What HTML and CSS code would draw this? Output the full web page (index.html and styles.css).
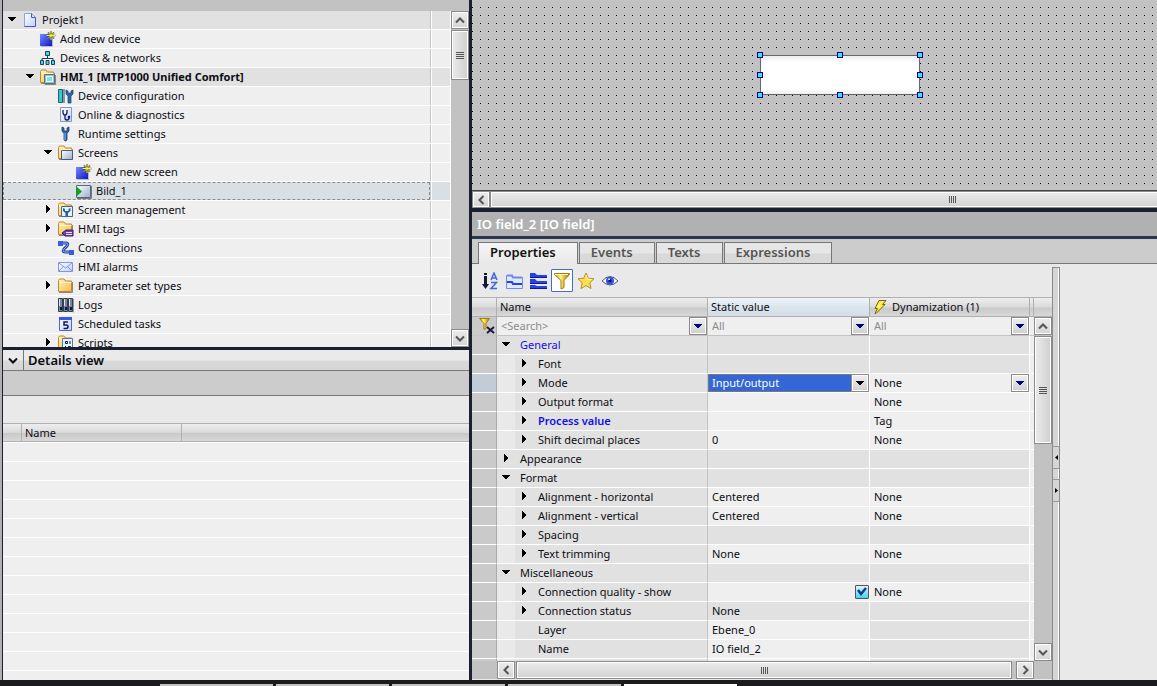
FILE: index.html
```html
<!DOCTYPE html>
<html lang="en">
<head>
<meta charset="utf-8">
<title>Projekt1</title>
<link rel="stylesheet" href="styles.css">
</head>
<body>
<svg class="defs" aria-hidden="true">
  <defs>
    <linearGradient id="g-folder" x1="0" y1="0" x2="1" y2="1"><stop offset="0" stop-color="#fff3b8"/><stop offset="1" stop-color="#f3bd4c"/></linearGradient>
    <linearGradient id="g-blue" x1="0" y1="0" x2="1" y2="1"><stop offset="0" stop-color="#6f8cff"/><stop offset="1" stop-color="#1414c4"/></linearGradient>
    <linearGradient id="g-page" x1="0" y1="0" x2="1" y2="1"><stop offset="0" stop-color="#ffffff"/><stop offset="1" stop-color="#c3d0ff"/></linearGradient>
    <linearGradient id="g-steel" x1="0" y1="0" x2="1" y2="1"><stop offset="0" stop-color="#ffffff"/><stop offset="1" stop-color="#9badcb"/></linearGradient>
    <linearGradient id="g-gold" x1="0" y1="0" x2="1" y2="0"><stop offset="0" stop-color="#c99b00"/><stop offset=".4" stop-color="#fff27c"/><stop offset="1" stop-color="#a87800"/></linearGradient>
    <symbol id="i-down" viewBox="0 0 8 5"><path d="M0 0h8v1H7v1H6v1H5v1H3V3H2V2H1V1H0z"/></symbol>
    <symbol id="t-down" viewBox="0 0 19 18"><path d="M5 6h8v1h-1v1h-1v1h-1v1H8V9H7V8H6V7H5z"/></symbol>
    <symbol id="t-right" viewBox="0 0 19 18"><path d="M7 4h1v1h1v1h1v1h1v2h-1v1H9v1H8v1H7z"/></symbol>
    <symbol id="i-page" viewBox="0 0 16 16"><path d="M2.500 1.500h7l4 4v9h-11z" fill="url(#g-page)" stroke="#8f9fe0"/><path d="M9.500 1.500v4h4v9h-11" fill="none" stroke="#4558c8"/></symbol>
    <symbol id="i-new" viewBox="0 0 16 16"><path d="M1 4h12v12H1z" fill="#8e9ab0" opacity=".6"/><path d="M0 3h12v12H0z" fill="url(#g-blue)"/><path d="M11 0v9M6.500 4.500h9M8 1.500l6 6M14 1.500l-6 6" stroke="#2b3430" stroke-width="1.600"/><path d="M11 0v9M6.500 4.500h9M8 1.500l6 6M14 1.500l-6 6" stroke="#fff34a"/></symbol>
    <symbol id="i-network" viewBox="0 0 16 16"><path d="M7.500 5v4M2 11V8.500h11V11" fill="none" stroke="#183c5c"/><path d="M5.500 1.500h4v4h-4zM.5 10.500h3v4h-3zM6 10.500h3v4H6zM11.500 10.500h3v4h-3z" fill="#4bd2dc" stroke="#1d3f60"/></symbol>
    <symbol id="i-folder" viewBox="0 0 16 16"><path d="M.5 13.500v-11l1-1.500h4.500l1.500 2h6v10.500z" fill="url(#g-folder)" stroke="#c3872b"/><path d="M1.500 4.500h12" stroke="#fff6cf"/><path d="M14.500 4v10.500H1" fill="none" stroke="#8d8778"/></symbol>
    <symbol id="i-hmi" viewBox="0 0 16 16"><use href="#i-folder"/><path d="M4.500 5.500h10v9h-10z" fill="#9ec0c4" stroke="#4c7580"/><path d="M6.500 7.500h6v5h-6z" fill="#6eeaec" stroke="#fff"/><path d="M15.500 6v9.500H5" fill="none" stroke="#888"/></symbol>
    <symbol id="i-wrench" viewBox="0 0 16 16"><path d="M4 1v4l2 2.500V14q1.500 2 3 0V7.500L11 5V1L9 2v3H6V2z" fill="#2c69a9" stroke="#173d70" stroke-width=".8"/><path d="M7 7v7" stroke="#84b8e8"/></symbol>
    <symbol id="i-devconf" viewBox="0 0 16 16"><path d="M.5 1.500h4v13h-4z" fill="#35c9d2" stroke="#205e6b"/><path d="M6 1v14" stroke="#8499a5" stroke-width="2"/><path d="M8 2v4l2 2v7h3V8l2-2V2l-2 1v2h-3V3z" fill="#2c69a9" stroke="#173d70" stroke-width=".7"/></symbol>
    <symbol id="i-diag" viewBox="0 0 16 16"><path d="M2.500.5h11v14h-11z" fill="url(#g-page)" stroke="#8599c7"/><path d="M5 3v2q0 3 2 3t2-3V3M7 8v3q0 2 2 2t2-2" fill="none" stroke="#141b56" stroke-width="1.300"/><circle cx="11" cy="10" r="1.300" fill="#141b56"/></symbol>
    <symbol id="i-screens" viewBox="0 0 16 16"><use href="#i-folder"/><path d="M3.500 5.500h11v9h-11z" fill="url(#g-steel)" stroke="#465b80"/></symbol>
    <symbol id="i-screen" viewBox="0 0 16 16"><path d="M.5 2.500h14v12H.5z" fill="url(#g-steel)" stroke="#52698d"/><path d="M15.500 3v12.500H1" fill="none" stroke="#777"/><path d="M0 3l6 5.500L0 14z" fill="#159c25"/></symbol>
    <symbol id="i-manage" viewBox="0 0 16 16"><use href="#i-folder"/><path d="M3.500 4.500h11v10h-11z" fill="#e8f0fb" stroke="#4d6686"/><path d="M5 6v3l2.500 2v3h2.500v-3l2.500-2V6l-2 1v2H7V7z" fill="#235fa5"/></symbol>
    <symbol id="i-tags" viewBox="0 0 16 16"><use href="#i-folder"/><path d="M4 12l4-3h7v6H7z" fill="#6b45ad" stroke="#3c1a78"/><path d="M8 11.500h6M8 13.500h6" stroke="#e8dcff"/></symbol>
    <symbol id="i-conn" viewBox="0 0 16 16"><path d="M3 3h5q3 0 1 3l-3 3q-2 3 1 3h6" fill="none" stroke="#27459e" stroke-width="3"/><path d="M3 3h5q3 0 1 3l-3 3q-2 3 1 3h6" fill="none" stroke="#8fb0ff"/><path d="M0 1h5v5H0zM11 10h5v5h-5z" fill="#355fdd"/></symbol>
    <symbol id="i-mail" viewBox="0 0 16 16"><path d="M.5 3.500h14v9H.5z" fill="url(#g-page)" stroke="#7e95e0"/><path d="M1 4l6.500 5L14 4M1 12l4-4M14 12l-4-4" fill="none" stroke="#7e95e0"/></symbol>
    <symbol id="i-logs" viewBox="0 0 16 16"><path d="M.5 1.500h4v13h-4zM5.500 1.500h4v13h-4zM10.500 1.500h4v13h-4z" fill="#7a879e" stroke="#333e52"/><path d="M1.500 2v7M6.500 2v7M11.500 2v7" stroke="#dfe6f2"/><path d="M2 10h2v3H2zM7 10h2v3H7zM12 10h2v3h-2z" fill="#111936"/><path d="M15.500 2v13.500" stroke="#999"/></symbol>
    <symbol id="i-task" viewBox="0 0 16 16"><path d="M1.500 1.500h12v13h-12z" fill="url(#g-page)" stroke="#5366c5"/><path d="M1 1h13v3H1z" fill="#3557e5"/><path d="M10 6H6v3h2q2 0 2 1.700T8 12.500H5.500" fill="none" stroke="#151a60" stroke-width="1.500"/></symbol>
    <symbol id="i-scripts" viewBox="0 0 16 16"><use href="#i-folder"/><path d="M4.500 3.500h10v12h-10z" fill="#e6f4ff" stroke="#55779c"/><path d="M7.500 6.500h2v2h-2zM12 6v3M7.500 11v3M10.500 11.500h2v2h-2z" fill="none" stroke="#111936"/></symbol>
    <symbol id="i-up" viewBox="0 0 10 7"><path d="M1 5.500l4-4 4 4" fill="none" stroke="#555" stroke-width="2"/></symbol>
    <symbol id="i-dn" viewBox="0 0 10 7"><path d="M1 1.500l4 4 4-4" fill="none" stroke="currentColor" stroke-width="2"/></symbol>
    <symbol id="i-lt" viewBox="0 0 7 10"><path d="M5.500 1l-4 4 4 4" fill="none" stroke="#555" stroke-width="2"/></symbol>
    <symbol id="i-rt" viewBox="0 0 7 10"><path d="M1.500 1l4 4-4 4" fill="none" stroke="#555" stroke-width="2"/></symbol>
    <symbol id="i-sort" viewBox="0 0 18 18"><path d="M4.500 1v2M4.500 4v9" stroke="#15153a" stroke-width="3"/><path d="M1 12h7l-3.500 5z" fill="#15153a"/><path d="M10 8l3-7 3 7M11 6h4M10 10.500h5.500l-5.500 6h6" fill="none" stroke="#4466dd" stroke-width="1.500"/></symbol>
    <symbol id="i-group" viewBox="0 0 18 18"><path d="M1.500 16.500v-13h5l1 2h10v11z" fill="#dfe8ff" stroke="#6f8be6"/><path d="M2 3.500h5l1 2h9" stroke="#6f8be6" stroke-width="2" fill="none"/><path d="M2 10h5l1 2h9" stroke="#2544df" stroke-width="2" fill="none"/></symbol>
    <symbol id="i-list" viewBox="0 0 18 18"><path d="M1 1h5l2 2h10v3H1zM1 7h5l2 2h10v3H1zM1 13h5l2 1h10v3H1z" fill="#2544df"/><path d="M1 5.500h17M1 11.500h17M1 16.500h17" stroke="#15159a"/><path d="M1 6.500h5M1 12.500h5M8 8.500h10M8 2.500h10" stroke="#dbe4ff"/></symbol>
    <symbol id="i-filter" viewBox="0 0 18 18"><path d="M1.500 1.500h15v1l-5.500 6v7l-3 1.500V8.500l-6.500-6z" fill="url(#g-gold)" stroke="#a77c0d"/><path d="M2 2.500h13" stroke="#fffbd0"/></symbol>
    <symbol id="i-star" viewBox="0 0 18 18"><path d="M9 1l2.300 5.200 5.700.6-4.200 3.900 1.200 5.800L9 13.600l-5 2.900 1.200-5.800L1 6.800l5.700-.6z" fill="#ffe04b" stroke="#b98b2e"/><path d="M9 3l1.500 4 4 .5" fill="none" stroke="#fffbc4"/></symbol>
    <symbol id="i-eye" viewBox="0 0 18 18"><path d="M1 9q8-9 16 0-8 8-16 0z" fill="#f5f7ff" stroke="#50567b"/><circle cx="9" cy="8.700" r="4" fill="#3155db"/><circle cx="9" cy="8.700" r="1.500" fill="#0c1058"/><path d="M7 6.500h2v1.500H7z" fill="#bcd2ff"/></symbol>
    <symbol id="i-clear" viewBox="0 0 18 18"><path d="M1.500 1.500h10l-3.500 5v5l-2 1v-6z" fill="url(#g-gold)" stroke="#a77c0d"/><path d="M9 10l7 6M16 10l-7 6" stroke="#14143e" stroke-width="1.800"/></symbol>
    <symbol id="i-bolt" viewBox="0 0 14 16"><path d="M6 1.500h7L9.500 5.500H12L3 14.500H2l2.500-5H2z" fill="#ffe733" stroke="#73651d"/><path d="M10 2L4.500 8H7" fill="none" stroke="#fffac0"/></symbol>
  </defs>
</svg>

<div class="app">
  <div class="workspace">
    <aside class="side">
      <div class="side-top"></div>
      <nav class="tree" aria-label="Project tree">
        <ul class="tree-list">
          <li class="node l1 shaded"><button class="name"><svg class="tw"><use href="#t-down"/></svg><svg class="ic"><use href="#i-page"/></svg>Projekt1</button></li>
          <li class="node l2"><button class="name"><span class="tw"></span><svg class="ic"><use href="#i-new"/></svg>Add new device</button></li>
          <li class="node l2"><button class="name"><span class="tw"></span><svg class="ic"><use href="#i-network"/></svg>Devices &amp; networks</button></li>
          <li class="node l2 shaded strong"><button class="name"><svg class="tw"><use href="#t-down"/></svg><svg class="ic"><use href="#i-hmi"/></svg>HMI_1 [MTP1000 Unified Comfort]</button></li>
          <li class="node l3"><button class="name"><span class="tw"></span><svg class="ic"><use href="#i-devconf"/></svg>Device configuration</button></li>
          <li class="node l3"><button class="name"><span class="tw"></span><svg class="ic"><use href="#i-diag"/></svg>Online &amp; diagnostics</button></li>
          <li class="node l3"><button class="name"><span class="tw"></span><svg class="ic"><use href="#i-wrench"/></svg>Runtime settings</button></li>
          <li class="node l3"><button class="name"><svg class="tw"><use href="#t-down"/></svg><svg class="ic"><use href="#i-screens"/></svg>Screens</button></li>
          <li class="node l4"><button class="name"><span class="tw"></span><svg class="ic"><use href="#i-new"/></svg>Add new screen</button></li>
          <li class="node l4 selected"><button class="name"><span class="tw"></span><svg class="ic"><use href="#i-screen"/></svg>Bild_1</button></li>
          <li class="node l3"><button class="name"><svg class="tw"><use href="#t-right"/></svg><svg class="ic"><use href="#i-manage"/></svg>Screen management</button></li>
          <li class="node l3"><button class="name"><svg class="tw"><use href="#t-right"/></svg><svg class="ic"><use href="#i-tags"/></svg>HMI tags</button></li>
          <li class="node l3"><button class="name"><span class="tw"></span><svg class="ic"><use href="#i-conn"/></svg>Connections</button></li>
          <li class="node l3"><button class="name"><span class="tw"></span><svg class="ic"><use href="#i-mail"/></svg>HMI alarms</button></li>
          <li class="node l3"><button class="name"><svg class="tw"><use href="#t-right"/></svg><svg class="ic"><use href="#i-folder"/></svg>Parameter set types</button></li>
          <li class="node l3"><button class="name"><span class="tw"></span><svg class="ic"><use href="#i-logs"/></svg>Logs</button></li>
          <li class="node l3"><button class="name"><span class="tw"></span><svg class="ic"><use href="#i-task"/></svg>Scheduled tasks</button></li>
          <li class="node l3"><button class="name"><svg class="tw"><use href="#t-right"/></svg><svg class="ic"><use href="#i-scripts"/></svg>Scripts</button></li>
        </ul>
        <div class="vbar">
          <button class="sbtn" aria-label="Scroll up"><svg width="10" height="7"><use href="#i-up"/></svg></button>
          <div class="thumb tree-thumb"><span class="grip"></span></div>
          <button class="sbtn last" aria-label="Scroll down"><svg width="10" height="7"><use href="#i-dn"/></svg></button>
        </div>
      </nav>
      <section class="details">
        <h2 class="details-head"><button class="details-toggle" aria-label="Collapse details"><svg width="10" height="7"><use href="#i-dn"/></svg></button><span class="details-title">Details view</span></h2>
        <div class="details-band"></div>
        <div class="details-tools"></div>
        <table class="details-table">
          <colgroup><col class="dc-a"><col class="dc-b"><col></colgroup>
          <thead><tr><th></th><th>Name</th><th></th></tr></thead>
        </table>
        <div class="details-rows"></div>
      </section>
    </aside>

    <main class="main">
      <div class="canvas">
        <div class="io-field">
          <i class="h tl"></i><i class="h tc"></i><i class="h tr"></i>
          <i class="h ml"></i><i class="h mr"></i>
          <i class="h bl"></i><i class="h bc"></i><i class="h br"></i>
        </div>
      </div>
      <div class="hbar canvas-bar">
        <button class="sbtn" aria-label="Scroll left"><svg width="7" height="10"><use href="#i-lt"/></svg></button>
        <div class="thumb-h open"><span class="grip-v"></span></div>
      </div>
      <h2 class="inspector-title">IO field_2 [IO field]</h2>
      <section class="inspector">
        <div class="tabs" role="tablist">
          <button class="tab active" role="tab" aria-selected="true">Properties</button>
          <button class="tab" role="tab">Events</button>
          <button class="tab" role="tab">Texts</button>
          <button class="tab" role="tab">Expressions</button>
        </div>
        <div class="inspector-body">
          <div class="props">
            <div class="toolbar">
              <button aria-label="Sort"><svg width="18" height="18"><use href="#i-sort"/></svg></button>
              <button aria-label="Group"><svg width="18" height="18"><use href="#i-group"/></svg></button>
              <button aria-label="Expand"><svg width="18" height="18"><use href="#i-list"/></svg></button>
              <button class="on" aria-label="Filter"><svg width="18" height="18"><use href="#i-filter"/></svg></button>
              <button aria-label="Favorites"><svg width="18" height="18"><use href="#i-star"/></svg></button>
              <button aria-label="Show"><svg width="18" height="18"><use href="#i-eye"/></svg></button>
            </div>
            <div class="grid">
              <div class="grid-view">
                <table class="ptable">
                  <colgroup><col class="c-sel"><col class="c-name"><col class="c-stat"><col class="c-dyn"><col class="c-end"></colgroup>
                  <thead>
                    <tr class="head"><th></th><th>Name</th><th class="hot">Static value</th><th><span class="dyn-head"><svg width="14" height="16"><use href="#i-bolt"/></svg>Dynamization (1)</span></th><th></th></tr>
                    <tr class="filter">
                      <td><button class="clear" aria-label="Clear filter"><svg width="18" height="18"><use href="#i-clear"/></svg></button></td>
                      <td><div class="combo"><input type="text" placeholder="&lt;Search&gt;" aria-label="Search name"><span class="drop"><svg width="8" height="5"><use href="#i-down"/></svg></span></div></td>
                      <td><div class="combo"><select aria-label="Static value filter"><option>All</option></select><span class="drop"><svg width="8" height="5"><use href="#i-down"/></svg></span></div></td>
                      <td><div class="combo"><select aria-label="Dynamization filter"><option>All</option></select><span class="drop"><svg width="8" height="5"><use href="#i-down"/></svg></span></div></td>
                      <td></td>
                    </tr>
                  </thead>
                  <tbody>
                    <tr class="grp"><td></td><td><span class="p blue"><svg class="tw"><use href="#t-down"/></svg>General</span></td><td></td><td></td><td></td></tr>
                    <tr><td></td><td><span class="p sub"><svg class="tw"><use href="#t-right"/></svg>Font</span></td><td class="off"></td><td class="off"></td><td></td></tr>
                    <tr class="current"><td></td><td><span class="p sub"><svg class="tw"><use href="#t-right"/></svg>Mode</span></td><td><div class="combo edit"><select aria-label="Mode"><option>Input/output</option></select><span class="drop"><svg width="8" height="5"><use href="#i-down"/></svg></span></div></td><td><div class="combo"><select aria-label="Mode dynamization"><option>None</option></select><span class="drop"><svg width="8" height="5"><use href="#i-down"/></svg></span></div></td><td></td></tr>
                    <tr><td></td><td><span class="p sub"><svg class="tw"><use href="#t-right"/></svg>Output format</span></td><td></td><td>None</td><td></td></tr>
                    <tr><td></td><td><span class="p sub blue bold"><svg class="tw"><use href="#t-right"/></svg>Process value</span></td><td></td><td>Tag</td><td></td></tr>
                    <tr><td></td><td><span class="p sub"><svg class="tw"><use href="#t-right"/></svg>Shift decimal places</span></td><td>0</td><td>None</td><td></td></tr>
                    <tr class="grp"><td></td><td><span class="p"><svg class="tw"><use href="#t-right"/></svg>Appearance</span></td><td></td><td></td><td></td></tr>
                    <tr class="grp"><td></td><td><span class="p"><svg class="tw"><use href="#t-down"/></svg>Format</span></td><td></td><td></td><td></td></tr>
                    <tr><td></td><td><span class="p sub"><svg class="tw"><use href="#t-right"/></svg>Alignment - horizontal</span></td><td>Centered</td><td>None</td><td></td></tr>
                    <tr><td></td><td><span class="p sub"><svg class="tw"><use href="#t-right"/></svg>Alignment - vertical</span></td><td>Centered</td><td>None</td><td></td></tr>
                    <tr><td></td><td><span class="p sub"><svg class="tw"><use href="#t-right"/></svg>Spacing</span></td><td class="off"></td><td class="off"></td><td></td></tr>
                    <tr><td></td><td><span class="p sub"><svg class="tw"><use href="#t-right"/></svg>Text trimming</span></td><td>None</td><td>None</td><td></td></tr>
                    <tr class="grp"><td></td><td><span class="p"><svg class="tw"><use href="#t-down"/></svg>Miscellaneous</span></td><td></td><td></td><td></td></tr>
                    <tr><td></td><td><span class="p sub"><svg class="tw"><use href="#t-right"/></svg><label for="cq">Connection quality - show</label></span></td><td><span class="tick"><input id="cq" type="checkbox" checked><svg viewBox="0 0 14 14" width="14" height="14"><path d="M3 5l3 4 5-6" fill="none" stroke="#123d86" stroke-width="2.500"/></svg></span></td><td>None</td><td></td></tr>
                    <tr><td></td><td><span class="p sub"><svg class="tw"><use href="#t-right"/></svg>Connection status</span></td><td class="off">None</td><td class="off"></td><td></td></tr>
                    <tr><td></td><td><span class="p sub"><span class="tw"></span>Layer</span></td><td>Ebene_0</td><td class="off"></td><td></td></tr>
                    <tr><td></td><td><span class="p sub"><span class="tw"></span>Name</span></td><td>IO field_2</td><td class="off"></td><td></td></tr>
                    <tr><td></td><td><span class="p sub"></span></td><td></td><td class="off"></td><td></td></tr>
                  </tbody>
                </table>
              </div>
              <div class="vside">
                <div class="vhead"></div>
                <div class="vbar">
                  <button class="sbtn" aria-label="Scroll up"><svg width="10" height="7"><use href="#i-up"/></svg></button>
                  <div class="thumb props-thumb"><span class="grip"></span></div>
                  <button class="sbtn last" aria-label="Scroll down"><svg width="10" height="7"><use href="#i-dn"/></svg></button>
                </div>
              </div>
            </div>
            <div class="hbar props-bar">
              <button class="sbtn" aria-label="Scroll left"><svg width="7" height="10"><use href="#i-lt"/></svg></button>
              <div class="thumb-h"><span class="grip-v"></span></div>
              <button class="sbtn" aria-label="Scroll right"><svg width="7" height="10"><use href="#i-rt"/></svg></button>
            </div>
          </div>
          <div class="splitter">
            <button aria-label="Expand pane"><svg width="3" height="5" viewBox="0 0 3 5"><path d="M3 0v5L0 2.500z"/></svg></button>
            <button aria-label="Collapse pane"><svg width="3" height="5" viewBox="0 0 3 5"><path d="M0 0v5l3-2.500z"/></svg></button>
          </div>
          <div class="blank"></div>
        </div>
      </section>
    </main>
  </div>
  <footer class="taskbar"><i></i><i></i><i></i><i></i><i class="now"></i></footer>
</div>
</body>
</html>
```

FILE: styles.css
```css
* { box-sizing: border-box; }

body {
  margin: 0;
  font: 11px/18px "Noto Sans", "Open Sans", sans-serif;
  color: #0c0c14;
  background: #1a2030;
}

button, input, select {
  margin: 0;
  padding: 0;
  border: 0;
  border-radius: 0;
  background: none;
  font: inherit;
  color: inherit;
}

svg { display: block; flex: none; }
.defs { position: absolute; width: 0; height: 0; }

.app { display: flex; flex-direction: column; height: 100vh; overflow: hidden; }

.workspace {
  flex: 1;
  min-height: 0;
  display: grid;
  grid-template-columns: minmax(0, 466fr) minmax(0, 685fr);
  grid-template-rows: minmax(0, 1fr);
  column-gap: 3px;
  padding-left: 1px;
  border-left: 2px solid #b0b0b0;
}

.side, .main { display: flex; flex-direction: column; min-height: 0; }

/* Project tree */
.side-top { height: 11px; background: #c2c2c2; }
.tree { flex: 336 1 0; min-height: 0; display: flex; background: #efefef; }
.tree-list {
  flex: 1;
  margin: 0;
  padding: 0;
  list-style: none;
  overflow: hidden;
  border-right: 1px solid #fff;
}
.node {
  display: flex;
  height: 19px;
  border-bottom: 1px solid #fff;
}
.node::after {
  content: "";
  width: 19px;
  border-left: 1px solid #c4c4c4;
  box-shadow: inset 1px 0 #fff;
}
.name {
  flex: 1;
  display: flex;
  align-items: center;
  text-align: left;
  white-space: nowrap;
}
.tw { width: 19px; height: 18px; flex: none; }
.ic { width: 16px; height: 16px; margin-right: 4px; }
.l2 .name { padding-left: 18px; }
.l3 .name { padding-left: 36px; }
.l4 .name { padding-left: 54px; }
.shaded { background: #e1e1e1; }
.strong { font-weight: 700; }
.selected { background: #d9dfe3; }
.selected .name { outline: 1px dashed #8c8c8c; outline-offset: -1px; }

/* Scroll bars */
.vbar {
  width: 18px;
  display: flex;
  flex-direction: column;
  background: #c2c2c2;
}
.hbar { display: flex; background: #c2c2c2; }
.sbtn {
  flex: none;
  width: 18px;
  height: 18px;
  display: grid;
  place-items: center;
  color: #555;
  border: 1px solid #8a8a8a;
  box-shadow: inset 0 0 0 1px #fff;
  background: linear-gradient(#ececec, #d4d4d4);
}
.last { margin-top: auto; }
.thumb, .thumb-h {
  display: grid;
  place-items: center;
  border: 1px solid #8a8a8a;
  box-shadow: inset 0 0 0 1px #fff;
}
.thumb { margin-top: 1px; background: linear-gradient(90deg, #ebebeb, #cfcfcf); }
.thumb-h { flex: 1; margin: 0 4px 0 1px; background: linear-gradient(#ebebeb, #d2d2d2); }
.tree-thumb { height: 50px; }
.props-thumb { height: 108px; }
.grip { width: 8px; height: 7px; background: repeating-linear-gradient(#555 0 1px, transparent 1px 2px); }
.grip-v { width: 7px; height: 7px; background: repeating-linear-gradient(90deg, #555 0 1px, transparent 1px 2px); }

/* Details view */
.details {
  flex: 330 1 0;
  min-height: 0;
  display: flex;
  flex-direction: column;
  margin-top: 3px;
  background: #e9e9e9;
}
.details-head {
  display: flex;
  height: 21px;
  margin: 0;
  font-size: 13px;
  font-weight: 600;
  line-height: 20px;
  border-bottom: 1px solid #777;
  background: linear-gradient(#eaeaea 50%, #d9d9d9 55%, #d6d6d6);
}
.details-toggle {
  width: 21px;
  display: grid;
  place-items: center;
  border-right: 1px solid #777;
}
.details-title { padding-left: 4px; }
.details-band { height: 25px; background: #ccc; border-bottom: 1px solid #777; }
.details-tools { height: 27px; }
table { width: 100%; border-spacing: 0; table-layout: fixed; }
th, td { padding: 0; text-align: left; font-weight: 400; white-space: nowrap; }
.details-table th {
  height: 19px;
  line-height: 17px;
  padding-left: 3px;
  border: 1px solid #b0b0b0;
  border-width: 1px 1px 1px 0;
  background: linear-gradient(#eee, #dadada 50%, #c9c9c9 55%, #d8d8d8);
}
.details-table th:last-child { border-right: 0; }
.dc-a { width: 19px; }
.dc-b { width: 160px; }
.details-rows { flex: 1; background: repeating-linear-gradient(#fff 0 1px, #efefef 1px 19px); }

/* Screen editor */
.canvas {
  flex: 190 1 0;
  min-height: 0;
  position: relative;
  background: conic-gradient(from 270deg at 1px 1px, #000 90deg, #c2c2c2 0) 0 7px / 8px 8px;
  overflow: hidden;
}
.io-field {
  position: absolute;
  left: 288px;
  top: 55px;
  width: 160px;
  height: 40px;
  border: 1px solid #66666e;
  border-radius: 3px;
  background: linear-gradient(#ececec, #fff 6px, #fff 33px, #f0f0f0);
}
.h {
  position: absolute;
  width: 6px;
  height: 6px;
  border: 1px solid #00008b;
  background: #35e4f5;
}
.tl, .tc, .tr { top: -4px; }
.ml, .mr { top: 16px; }
.bl, .bc, .br { top: 36px; }
.tl, .ml, .bl { left: -4px; }
.tc, .bc { left: 76px; }
.tr, .mr, .br { left: 156px; }
.canvas-bar { height: 18px; overflow: hidden; border-top: 1px solid #444; }
.canvas-bar .sbtn { height: 17px; }
.open { flex: none; width: 135%; margin: 0; }

/* Inspector */
.inspector-title {
  margin: 4px 0 3px;
  padding-left: 5px;
  height: 24px;
  font-size: 13px;
  font-weight: 600;
  line-height: 24px;
  color: #fff;
  background: #b1b1b1;
  box-shadow: 0 3px #2c3650;
}
.inspector {
  flex: 441 1 0;
  min-height: 0;
  display: flex;
  flex-direction: column;
  background: #e9e9e9;
}
.tabs {
  display: flex;
  gap: 1px;
  height: 25px;
  padding: 3px 0 0 6px;
  background: #ccc;
  box-shadow: inset 0 -1px #777;
}
.tab {
  padding: 0 21px 3px 11px;
  font-size: 13px;
  font-weight: 600;
  line-height: 18px;
  color: #555;
  border: 1px solid #777;
  background: linear-gradient(#e6e6e6 50%, #d9d9d9 55%);
}
.active { color: #111; border-bottom: 0; background: linear-gradient(#f4f4f4, #e9e9e9); }

.inspector-body { flex: 1; min-height: 0; display: flex; }
.props { flex: 580 1 0; min-width: 0; display: flex; flex-direction: column; }
.toolbar { display: flex; gap: 2px; height: 33px; padding: 5px 0 0 7px; }
.toolbar button { width: 22px; height: 24px; display: grid; place-items: center; }
.toolbar .on { height: 23px; border: 1px solid #3d6fc9; border-radius: 1px; background: #fff; }

.grid { flex: 1; min-height: 0; display: flex; }
.grid-view { flex: 1; min-width: 0; overflow: hidden; background: #efefef; }
.c-sel { width: 25px; }
.c-name { width: 211px; }
.c-stat { width: 162px; }
.c-dyn { width: 160px; }
.c-end { width: 4px; }
.head th {
  height: 20px;
  line-height: 17px;
  padding: 0 0 1px 3px;
  border-top: 1px solid #b0b0b0;
  border-right: 1px solid #b0b0b0;
  border-bottom: 1px solid #b0b0b0;
  background: linear-gradient(#eee, #dadada 50%, #c9c9c9 55%, #d8d8d8);
}
.head .hot { background: linear-gradient(#eff4f8, #dce5ec 50%, #d3dde5); }
.dyn-head { display: flex; gap: 5px; height: 16px; line-height: 16px; }

.ptable td {
  height: 19px;
  padding-left: 4px;
  border-right: 1px solid #fff;
  border-bottom: 1px solid #fff;
  background: #efefef;
}
.ptable td:first-child { padding: 0; background: #cacaca; border-right-color: #aaa; }
.ptable td:nth-child(2) { padding: 0; background: #e1e1e1; border-right: 1px solid #c4c4c4; }
.ptable td:last-child { padding: 0; border-right: 0; }
.ptable .grp td:nth-child(3), .ptable .grp td:nth-child(4), .ptable .off { background: #e1e1e1; }
.ptable .current td:first-child { background: #c2ccd7; }
.ptable .filter td { border-bottom-color: #c4c4c4; color: #8c8c8c; background: #efefef; }
.ptable .filter td:first-child { background: #cacaca; }
.clear { display: block; margin-left: 6px; }

.p { display: flex; height: 18px; }
.p .tw { margin-right: 4px; }
.sub { border-left: 18px solid #e9e9e9; }
.blue { color: #0f0fe8; }
.bold { font-weight: 600; }

.combo { display: grid; height: 18px; }
.combo > * { grid-area: 1 / 1; min-width: 0; }
.combo select, .combo input {
  appearance: none;
  width: 100%;
  height: 18px;
  line-height: 18px;
  outline: 0;
}
.combo input { padding-left: 4px; }
.combo input::placeholder { color: #8c8c8c; opacity: 1; }
.drop {
  justify-self: end;
  width: 18px;
  height: 18px;
  display: grid;
  place-items: center;
  pointer-events: none;
  fill: #00008b;
  border: 1px solid #8a8a8a;
  box-shadow: inset 0 0 0 1px #fff;
  background: linear-gradient(#efefef, #cfcfcf);
}
.edit { margin-left: -4px; background: #3366d6; color: #fff; }
.edit select { padding-left: 3px; border: 1px solid #77777f; line-height: 16px; }
.edit .drop { fill: #000; }

.tick { display: grid; justify-content: end; align-content: center; height: 18px; }
.tick > * { grid-area: 1 / 1; }
.tick input {
  appearance: none;
  width: 14px;
  height: 14px;
  border: 1px solid #555;
  border-radius: 1px;
  background: linear-gradient(#e4f2ff, #41d3f2);
}
.tick svg { pointer-events: none; }

.vside { display: flex; flex-direction: column; width: 18px; }
.vhead {
  height: 20px;
  border-top: 1px solid #b0b0b0;
  border-bottom: 1px solid #b0b0b0;
  background: linear-gradient(#eee, #dadada 50%, #c9c9c9 55%, #d8d8d8);
}
.vside .vbar { flex: 1; min-height: 0; }
.props-bar { height: 19px; padding: 0 18px 0 25px; border-bottom: 1px solid #e9e9e9; }

.splitter {
  width: 8px;
  display: flex;
  flex-direction: column;
  justify-content: center;
  gap: 10px;
  margin-top: 3px;
  border: 1px solid #8a8a8a;
  border-bottom: 0;
  background: linear-gradient(90deg, #d5d5d5 5px, #fff 5px);
}
.splitter button {
  height: 23px;
  display: grid;
  place-items: center;
  border-top: 1px solid #999;
  border-bottom: 1px solid #999;
  background: #d5d5d5;
}
.blank { flex: 97 1 0; }

/* Task bar */
.taskbar {
  display: flex;
  gap: 3px;
  height: 6px;
  padding: 4px 0 0 160px;
  background: #1b1b1d;
}
.taskbar i { width: 113px; background: #c2c2c2; }
.taskbar .now { background: #fff; }
```
